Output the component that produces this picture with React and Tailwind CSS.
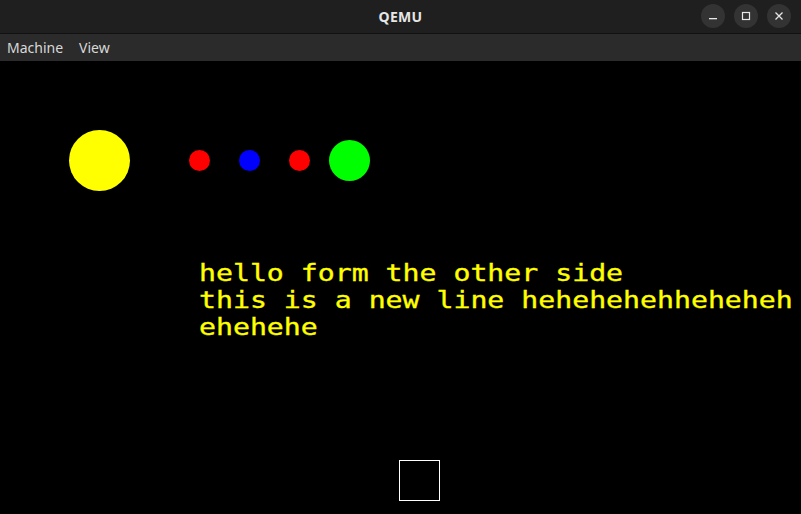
export default function App() {
  return (
    <div className="w-[801px] h-[514px] flex flex-col bg-black overflow-hidden" style={{ fontFamily: '"Noto Sans", "Open Sans", sans-serif' }}>
      <div className="h-[34px] bg-[#1f1f1f] relative flex items-center justify-center border-b border-[#111]">
        <span className="text-[14px] font-bold text-[#e6e6e6] tracking-[0.3px]">QEMU</span>
        <div className="absolute right-[10px] top-[4px] flex gap-[9px]">
          <div className="w-[24px] h-[24px] rounded-full bg-[#333333] flex items-center justify-center">
            <svg width="10" height="10" viewBox="0 0 10 10"><rect x="1" y="7" width="8" height="1.3" fill="#e8e8e8" /></svg>
          </div>
          <div className="w-[24px] h-[24px] rounded-full bg-[#333333] flex items-center justify-center">
            <svg width="10" height="10" viewBox="0 0 10 10"><rect x="1.5" y="1.5" width="7" height="7" fill="none" stroke="#e8e8e8" strokeWidth="1.2" /></svg>
          </div>
          <div className="w-[24px] h-[24px] rounded-full bg-[#333333] flex items-center justify-center">
            <svg width="10" height="10" viewBox="0 0 10 10"><path d="M1.5 1.5 L8.5 8.5 M8.5 1.5 L1.5 8.5" stroke="#e8e8e8" strokeWidth="1.3" /></svg>
          </div>
        </div>
      </div>
      <div className="h-[27px] bg-[#2b2b2b] flex items-center gap-[16px] px-[7px] text-[14px] text-[#d8d8d8]">
        <span>Machine</span>
        <span>View</span>
      </div>
      <div className="relative flex-1 bg-black">
        <div className="absolute left-[69px] top-[69px] w-[61px] h-[61px] rounded-full bg-[#ffff00]" />
        <div className="absolute left-[189px] top-[89px] w-[21px] h-[21px] rounded-full bg-[#ff0000]" />
        <div className="absolute left-[239px] top-[89px] w-[21px] h-[21px] rounded-full bg-[#0000ff]" />
        <div className="absolute left-[289px] top-[89px] w-[21px] h-[21px] rounded-full bg-[#ff0000]" />
        <div className="absolute left-[329px] top-[79px] w-[41px] h-[41px] rounded-full bg-[#00ff00]" />
        <div
          className="absolute left-[199px] top-[199px] text-[23px] leading-[27px] text-[#ffff00] whitespace-pre origin-left scale-x-[1.225] [-webkit-text-stroke:0.35px_#ffff00]"
          style={{ fontFamily: '"DejaVu Sans Mono", monospace' }}
        >
          {"hello form the other side\nthis is a new line hehehehehheheheh\nehehehe"}
        </div>
        <div className="absolute left-[399px] top-[399px] w-[41px] h-[41px] border border-white" />
      </div>
    </div>
  );
}
